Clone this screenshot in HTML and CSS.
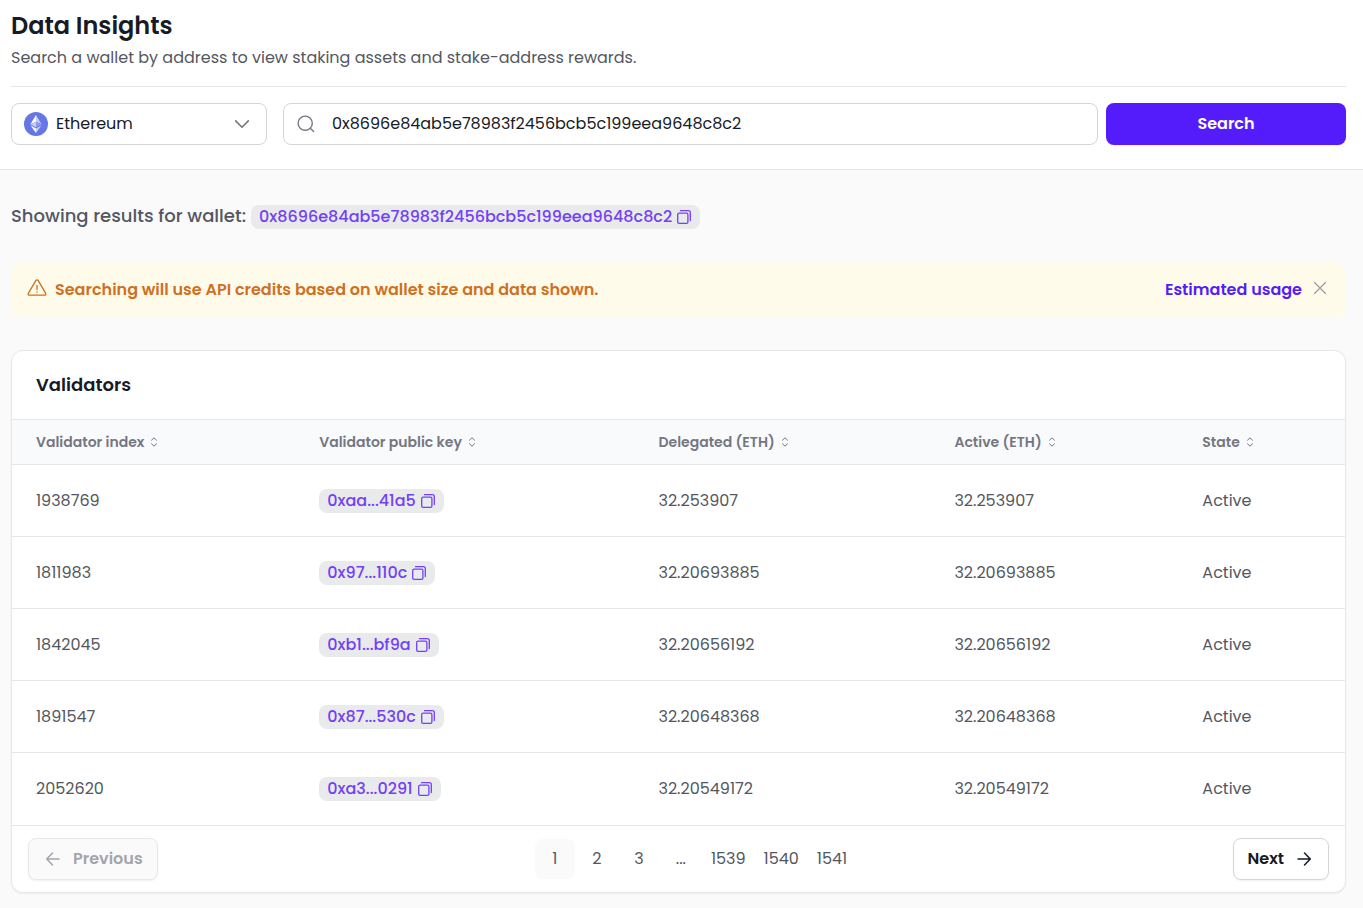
FILE: index.html
```html
<!DOCTYPE html>
<html lang="en">
<head>
    <meta charset="UTF-8">
    <meta name="viewport" content="width=device-width, initial-scale=1.0">
    <title>Data Insights</title>
    <link rel="stylesheet" href="styles.css">
</head>
<body>
    <!-- shared icons -->
    <svg class="sprite" aria-hidden="true">
        <symbol id="icon-copy" viewBox="0 0 16 16">
            <rect x="1.7" y="4.1" width="10.2" height="10.2" rx="1.4"/>
            <path d="M4.5 1.7h7.8a2 2 0 0 1 2 2v7.8"/>
        </symbol>
        <symbol id="icon-sort" viewBox="0 0 8 12">
            <path d="M1.5 4.2 4 1.8l2.5 2.4M1.5 7.8 4 10.2l2.5-2.4"/>
        </symbol>
    </svg>

    <header class="top">
        <div class="intro">
            <h1>Data Insights</h1>
            <p>Search a wallet by address to view staking assets and stake-address rewards.</p>
        </div>
        <form class="search-form" onsubmit="return false">
            <div class="field network">
                <svg class="eth" viewBox="0 0 24 24" aria-hidden="true">
                    <circle cx="12" cy="12" r="12" fill="#6577e6"/>
                    <path d="M12 3v6.7l5.6 2.5z" fill="#c5ccf6"/>
                    <path d="M12 3 6.4 12.2 12 9.7z" fill="#fff"/>
                    <path d="M12 16.5v4.5l5.6-7.8z" fill="#c5ccf6"/>
                    <path d="M12 21v-4.5l-5.6-3.3z" fill="#fff"/>
                    <path d="m12 15.5 5.6-3.3L12 9.7z" fill="#8e9bed"/>
                    <path d="m6.4 12.2 5.6 3.3V9.7z" fill="#c5ccf6"/>
                </svg>
                <select id="network" aria-label="Network">
                    <option>Ethereum</option>
                </select>
                <svg class="chevron" viewBox="0 0 16 16" aria-hidden="true"><path d="m1.7 4.9 6.3 6.4 6.3-6.4"/></svg>
            </div>
            <div class="field wallet">
                <svg class="lens" viewBox="0 0 20 20" aria-hidden="true"><circle cx="9.2" cy="9.2" r="7.1"/><path d="m14.3 14.3 3.3 3.3"/></svg>
                <input type="text" id="wallet" aria-label="Wallet address" value="0x8696e84ab5e78983f2456bcb5c199eea9648c8c2">
            </div>
            <button type="submit" class="search-btn">Search</button>
        </form>
    </header>

    <main>
        <div class="results">
            <span>Showing results for wallet:</span>
            <span class="chip"><a href="#!">0x8696e84ab5e78983f2456bcb5c199eea9648c8c2</a><button type="button" class="copy" aria-label="Copy"><svg><use href="#icon-copy"/></svg></button></span>
        </div>

        <div class="notice">
            <svg class="warning" viewBox="0 0 20 20" aria-hidden="true"><path d="M8.9 2.4 1.3 15.4a1.1 1.1 0 0 0 1 1.7h15.4a1.1 1.1 0 0 0 1-1.7L11.1 2.4a1.3 1.3 0 0 0-2.2 0z"/><path d="M10 7.4v4.2M10 13.8v.4"/></svg>
            <p>Searching will use API credits based on wallet size and data shown.</p>
            <a href="#!">Estimated usage</a>
            <button type="button" class="close" aria-label="Dismiss"><svg viewBox="0 0 20 20"><path d="m4.5 4.5 11 11M15.5 4.5l-11 11"/></svg></button>
        </div>

        <section class="card">
            <h2>Validators</h2>
            <table>
                <thead>
                    <tr>
                        <th class="col-index"><button type="button">Validator index <svg><use href="#icon-sort"/></svg></button></th>
                        <th class="col-key"><button type="button">Validator public key <svg><use href="#icon-sort"/></svg></button></th>
                        <th class="col-delegated"><button type="button">Delegated (ETH) <svg><use href="#icon-sort"/></svg></button></th>
                        <th class="col-active"><button type="button">Active (ETH) <svg><use href="#icon-sort"/></svg></button></th>
                        <th><button type="button">State <svg><use href="#icon-sort"/></svg></button></th>
                    </tr>
                </thead>
                <tbody>
                    <tr>
                        <td>1938769</td>
                        <td><span class="chip"><a href="#!">0xaa...41a5</a><button type="button" class="copy" aria-label="Copy"><svg><use href="#icon-copy"/></svg></button></span></td>
                        <td>32.253907</td>
                        <td>32.253907</td>
                        <td>Active</td>
                    </tr>
                    <tr>
                        <td>1811983</td>
                        <td><span class="chip"><a href="#!">0x97...110c</a><button type="button" class="copy" aria-label="Copy"><svg><use href="#icon-copy"/></svg></button></span></td>
                        <td>32.20693885</td>
                        <td>32.20693885</td>
                        <td>Active</td>
                    </tr>
                    <tr>
                        <td>1842045</td>
                        <td><span class="chip"><a href="#!">0xb1...bf9a</a><button type="button" class="copy" aria-label="Copy"><svg><use href="#icon-copy"/></svg></button></span></td>
                        <td>32.20656192</td>
                        <td>32.20656192</td>
                        <td>Active</td>
                    </tr>
                    <tr>
                        <td>1891547</td>
                        <td><span class="chip"><a href="#!">0x87...530c</a><button type="button" class="copy" aria-label="Copy"><svg><use href="#icon-copy"/></svg></button></span></td>
                        <td>32.20648368</td>
                        <td>32.20648368</td>
                        <td>Active</td>
                    </tr>
                    <tr>
                        <td>2052620</td>
                        <td><span class="chip"><a href="#!">0xa3...0291</a><button type="button" class="copy" aria-label="Copy"><svg><use href="#icon-copy"/></svg></button></span></td>
                        <td>32.20549172</td>
                        <td>32.20549172</td>
                        <td>Active</td>
                    </tr>
                </tbody>
            </table>
            <nav class="pagination" aria-label="Pagination">
                <button type="button" class="step" disabled><svg viewBox="0 0 20 20"><path d="M16 10H4M9.5 4 3.7 10l5.8 6"/></svg>Previous</button>
                <div class="pages">
                    <button type="button" class="current">1</button>
                    <button type="button">2</button>
                    <button type="button">3</button>
                    <span>...</span>
                    <button type="button">1539</button>
                    <button type="button">1540</button>
                    <button type="button">1541</button>
                </div>
                <button type="button" class="step">Next<svg viewBox="0 0 20 20"><path d="M4 10h12M10.5 4l5.8 6-5.8 6"/></svg></button>
            </nav>
        </section>
    </main>
</body>
</html>
```

FILE: styles.css
```css
* {
    box-sizing: border-box;
}
body {
    margin: 0;
    background-color: #fafafa;
    color: #545761;
    font-family: Poppins, Inter, sans-serif;
    font-size: 16px;
    line-height: 24px;
}
h1, h2, p {
    margin: 0;
}
a {
    text-decoration: none;
}
button, input, select {
    font: inherit;
    color: inherit;
}
button {
    padding: 0;
    border: none;
    background: none;
    cursor: pointer;
}
svg {
    flex: none;
    fill: none;
    stroke: currentColor;
    stroke-linecap: round;
    stroke-linejoin: round;
}
.sprite {
    display: none;
}

/* header and search */
.top {
    padding: 10px 17px 24px 11px;
    background-color: #fff;
    border-bottom: 1px solid #e6e7e9;
}
.intro {
    padding-bottom: 16px;
    margin-bottom: 16px;
    border-bottom: 1px solid #e6e7e9;
}
h1 {
    color: #171b26;
    font-size: 24px;
    font-weight: 600;
    line-height: 32px;
}
.intro p {
    padding-top: 4px;
}
.search-form {
    display: flex;
}
.field {
    display: flex;
    align-items: center;
    height: 42px;
    padding: 0 12px;
    background-color: #fff;
    border: 1px solid #d4d5d9;
    border-radius: 8px;
    color: #171b26;
}
.field select, .field input {
    flex: 1;
    min-width: 0;
    padding: 0;
    border: none;
    outline: none;
    background: none;
    appearance: none;
}
.network {
    width: 256px;
    margin-right: 16px;
    gap: 8px;
}
.wallet {
    flex: 1;
    margin-right: 8px;
    gap: 16px;
}
.eth {
    width: 24px;
    height: 24px;
    stroke: none;
}
.chevron {
    width: 16px;
    height: 16px;
    margin-right: 4px;
    color: #747782;
    stroke-width: 1.6;
}
.lens {
    width: 20px;
    height: 20px;
    color: #747782;
    stroke-width: 1.4;
}
.search-btn {
    width: 240px;
    border-radius: 8px;
    background-color: #541cfa;
    box-shadow: 0 1px 2px rgba(16, 24, 40, 0.06);
    color: #fff;
    font-weight: 600;
}

/* results */
main {
    padding: 32px 17px 15px 11px;
}
.results {
    display: flex;
    align-items: baseline;
    gap: 5px;
    height: 28px;
    margin-bottom: 32px;
    font-size: 18px;
    font-weight: 500;
    line-height: 28px;
}
.chip {
    display: inline-flex;
    align-items: center;
    gap: 4px;
    height: 24px;
    padding: 0 8px;
    border-radius: 8px;
    background-color: #e9eaec;
    color: #7341f5;
    font-size: 16px;
    font-weight: 500;
    line-height: 24px;
    vertical-align: middle;
}
.chip a {
    color: inherit;
}
.copy, .copy svg {
    display: block;
    width: 16px;
    height: 16px;
}
.copy svg {
    stroke-width: 1.3;
}
.notice {
    display: flex;
    align-items: flex-start;
    margin-bottom: 32px;
    padding: 16px;
    border-radius: 12px;
    background-color: #fffbeb;
    color: #d0701f;
    font-weight: 600;
}
.notice p {
    flex: 1;
    padding-left: 8px;
}
.notice a {
    color: #541cfa;
}
.warning {
    width: 20px;
    height: 20px;
    stroke-width: 1.3;
}
.close {
    margin-left: 8px;
    color: #9a9ca5;
}
.close svg {
    display: block;
    width: 20px;
    height: 20px;
    stroke-width: 1.2;
}

/* validators table */
.card {
    overflow: hidden;
    background-color: #fff;
    border: 1px solid #e6e7e9;
    border-radius: 12px;
    box-shadow: 0 1px 2px rgba(16, 24, 40, 0.06);
}
h2 {
    padding: 20px 24px;
    color: #171b26;
    font-size: 18px;
    font-weight: 600;
    line-height: 28px;
}
table {
    width: 100%;
    table-layout: fixed;
    border-spacing: 0;
}
th, td {
    padding: 0 24px;
    text-align: left;
}
th {
    height: 46px;
    background-color: #f9fafc;
    border-top: 1px solid #e6e7e9;
    border-bottom: 1px solid #e6e7e9;
    color: #747782;
}
th button {
    display: flex;
    align-items: center;
    gap: 6px;
    font-size: 14px;
    font-weight: 600;
}
th svg {
    width: 8px;
    height: 12px;
}
td {
    height: 72px;
    border-bottom: 1px solid #e6e7e9;
}
tr:last-child td {
    border-bottom: none;
}
.col-index {
    width: 21.25%;
}
.col-key {
    width: 25.45%;
}
.col-delegated {
    width: 22.2%;
}
.col-active {
    width: 18.6%;
}

.pagination {
    display: flex;
    align-items: center;
    justify-content: space-between;
    padding: 12px 16px;
    border-top: 1px solid #e6e7e9;
}
.step {
    display: flex;
    align-items: center;
    gap: 10px;
    height: 42px;
    padding: 0 14px;
    border: 1px solid #d4d5d9;
    border-radius: 8px;
    box-shadow: 0 1px 2px rgba(16, 24, 40, 0.06);
    color: #171b26;
    font-weight: 600;
}
.step:disabled {
    border-color: #e6e7e9;
    background-color: #fafafa;
    color: #a3a5ad;
    cursor: default;
}
.step svg {
    width: 20px;
    height: 20px;
    stroke-width: 1.5;
}
.pages {
    display: flex;
    gap: 2px;
    line-height: 40px;
    text-align: center;
}
.pages button, .pages span {
    min-width: 40px;
    height: 40px;
    padding: 0 8px;
}
.pages .current {
    border-radius: 8px;
    background-color: #fafafa;
}
```
